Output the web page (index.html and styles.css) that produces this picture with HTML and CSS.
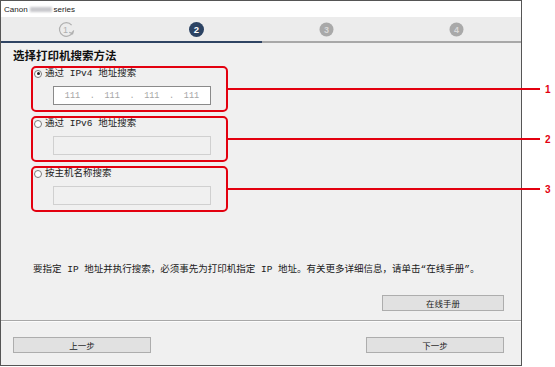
FILE: index.html
```html
<!DOCTYPE html>
<html lang="zh">
<head>
<meta charset="utf-8">
<title>Canon series</title>
<link rel="stylesheet" href="styles.css">
</head>
<body>
<div class="window">
  <div class="titlebar">Canon <span class="blur"></span> series</div>
  <div class="steps">
    <div class="step">
      <svg width="17" height="17" viewBox="0 0 17 17"><path d="M14.8 10.5 A6.8 6.8 0 1 1 13.6 4.2" fill="none" stroke="#b0b0b0" stroke-width="1.2"/><path d="M11.2 11.2 L14.6 12.8 L15.6 9.4" fill="none" stroke="#b0b0b0" stroke-width="1.2"/><text x="7.6" y="12" font-size="9" font-family="Liberation Sans" fill="#b0b0b0" text-anchor="middle">1</text></svg>
    </div>
    <div class="step">
      <svg width="17" height="17" viewBox="0 0 17 17"><circle cx="8.5" cy="8.5" r="7.5" fill="#2c4363"/><text x="8.5" y="11.8" font-size="9.5" font-weight="bold" font-family="Liberation Sans" fill="#fff" text-anchor="middle">2</text></svg>
    </div>
    <div class="step">
      <svg width="17" height="17" viewBox="0 0 17 17"><circle cx="8.5" cy="8.5" r="7" fill="#a9a9a9"/><text x="8.5" y="11.6" font-size="9" font-weight="bold" font-family="Liberation Sans" fill="#d8d8d8" text-anchor="middle">3</text></svg>
    </div>
    <div class="step">
      <svg width="17" height="17" viewBox="0 0 17 17"><circle cx="8.5" cy="8.5" r="7" fill="#a9a9a9"/><text x="8.5" y="11.6" font-size="9" font-weight="bold" font-family="Liberation Sans" fill="#d8d8d8" text-anchor="middle">4</text></svg>
    </div>
  </div>
  <div class="progress"><div class="progress-done"></div><div class="progress-rest"></div></div>
  <div class="main">
    <h1 class="heading">选择打印机搜索方法</h1>
    <div class="group-row">
      <div class="group">
        <div class="option"><span class="radio checked"></span><span>通过 IPv4 地址搜索</span></div>
        <div class="field active"><span>111</span><span>.</span><span>111</span><span>.</span><span>111</span><span>.</span><span>111</span></div>
      </div>
      <div class="callout-line"></div><div class="callout-num">1</div>
    </div>
    <div class="group-row">
      <div class="group">
        <div class="option"><span class="radio"></span><span>通过 IPv6 地址搜索</span></div>
        <div class="field"></div>
      </div>
      <div class="callout-line"></div><div class="callout-num">2</div>
    </div>
    <div class="group-row">
      <div class="group">
        <div class="option"><span class="radio"></span><span>按主机名称搜索</span></div>
        <div class="field"></div>
      </div>
      <div class="callout-line"></div><div class="callout-num">3</div>
    </div>
    <p class="note">要指定 IP 地址并执行搜索，必须事先为打印机指定 IP 地址。有关更多详细信息，请单击“在线手册”。</p>
    <div class="manual-row"><button class="btn btn-manual">在线手册</button></div>
  </div>
  <div class="footer">
    <button class="btn btn-nav">上一步</button>
    <button class="btn btn-nav">下一步</button>
  </div>
</div>
</body>
</html>
```
FILE: styles.css
```css
* { box-sizing: border-box; }
html, body { margin: 0; padding: 0; background: #ffffff; }
body {
  width: 555px;
  height: 367px;
  overflow: hidden;
  font-family: "Liberation Mono", "Noto Sans CJK SC", monospace;
  color: #1a1a1a;
}
.window {
  width: 522px;
  height: 366px;
  border: 1px solid #555555;
  background: #f0f0f0;
  display: flex;
  flex-direction: column;
}
.titlebar {
  height: 16px;
  background: #ffffff;
  font-family: "Liberation Sans", sans-serif;
  font-size: 8px;
  line-height: 15px;
  padding-left: 3px;
  color: #222;
  display: flex;
  align-items: center;
  gap: 2px;
}
.blur {
  display: inline-block;
  width: 22px;
  height: 5px;
  background: #c8c8cc;
  filter: blur(1px);
}
.steps {
  height: 24px;
  background: #ececec;
  display: grid;
  grid-template-columns: repeat(4, 130px);
  align-items: center;
}
.step { display: flex; justify-content: center; align-items: center; height: 24px; }
.step svg { display: block; }
.progress { display: flex; height: 2px; }
.progress-done { width: 261px; background: #2f4463; }
.progress-rest { flex: 1; background: #a8a8a8; }
.main {
  flex: 1;
  padding-top: 5px;
  padding-bottom: 8px;
  border-bottom: 1px solid #a8a8a8;
}
.heading {
  margin: 0 0 4px 12px;
  font-family: "Noto Sans CJK SC", sans-serif;
  font-size: 11.5px;
  line-height: 14px;
  font-weight: bold;
  color: #111;
}
.group-row {
  display: flex;
  align-items: center;
  margin-left: 30px;
  width: 530px;
  margin-bottom: 4px;
}
.group {
  width: 197px;
  height: 46px;
  border: 2px solid #e3000f;
  border-radius: 5px;
  padding: 0 0 0 1px;
}
.option {
  display: flex;
  align-items: center;
  gap: 3px;
  height: 11px;
  font-size: 9.5px;
  line-height: 11px;
  color: #222;
}
.radio {
  width: 8px;
  height: 8px;
  border-radius: 50%;
  border: 1px solid #7a7a7a;
  background: #fff;
  position: relative;
  flex: none;
}
.radio.checked::after {
  content: "";
  position: absolute;
  left: 1.5px;
  top: 1.5px;
  width: 3px;
  height: 3px;
  border-radius: 50%;
  background: #222;
}
.field {
  margin: 7px 0 0 19px;
  width: 158px;
  height: 19px;
  border: 1px solid #d0d0d0;
  background: #f0f0f0;
}
.field.active {
  background: #ffffff;
  border-color: #8a8a8a;
  display: flex;
  justify-content: space-around;
  align-items: center;
  padding: 0 6px;
  font-size: 8.5px;
  color: #a5a5a5;
}
.callout-line {
  width: 312px;
  height: 2px;
  background: #e3000f;
}
.callout-num {
  margin-left: 5px;
  font-family: "Liberation Sans", sans-serif;
  font-weight: bold;
  font-size: 10px;
  color: #e3000f;
}
.note {
  margin: 51px 0 0 32px;
  font-size: 9.5px;
  line-height: 14px;
  white-space: nowrap;
  color: #1a1a1a;
}
.manual-row {
  display: flex;
  justify-content: flex-end;
  margin-top: 18px;
  padding-right: 17px;
}
.btn {
  height: 16px;
  background: #e1e1e1;
  border: 1px solid #adadad;
  font-family: "Noto Sans CJK SC", sans-serif;
  font-size: 8.5px;
  line-height: 13px;
  color: #222;
  padding: 0;
}
.btn-manual { width: 122px; }
.footer {
  height: 44px;
  display: flex;
  justify-content: space-between;
  align-items: flex-start;
  padding: 15px 17px 0 12px;
  border-top: 1px solid #fcfcfc;
}
.btn-nav { width: 138px; }
```
